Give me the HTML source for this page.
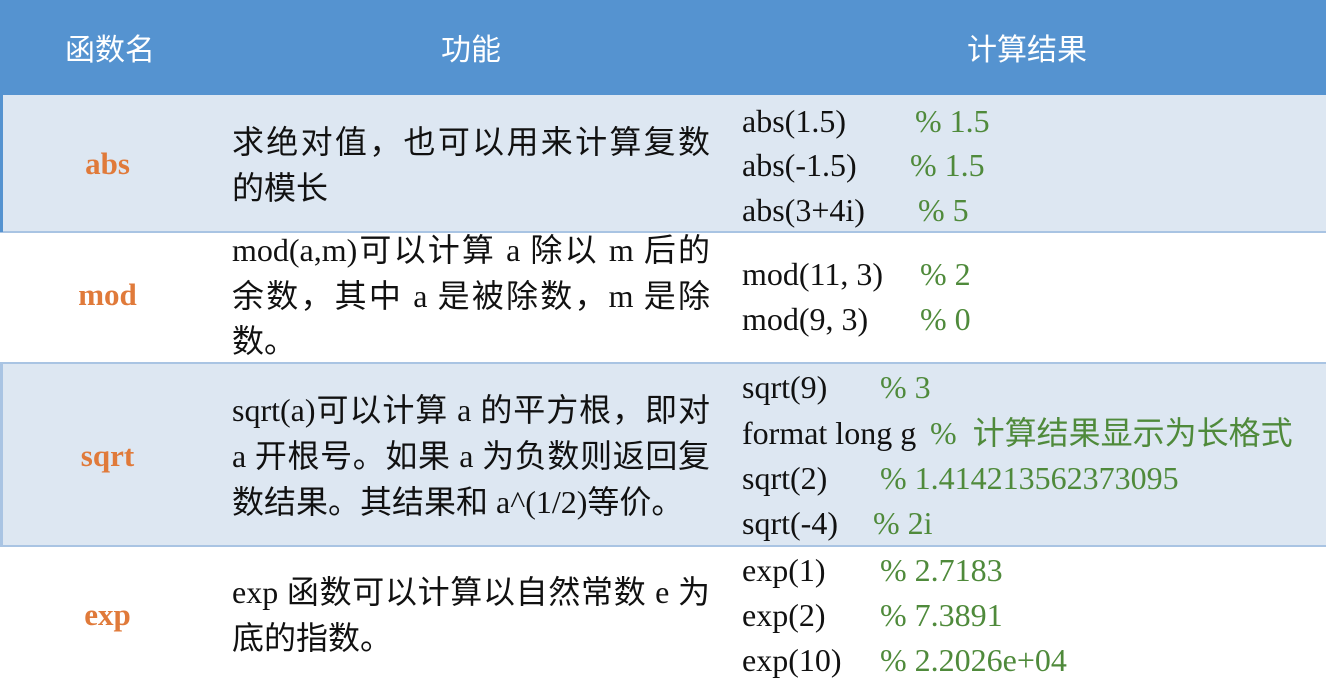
<!DOCTYPE html>
<html><head><meta charset="utf-8"><style>
body{margin:0;width:1326px;height:677px;overflow:hidden;background:#fff;position:relative;font-family:"Liberation Serif","Noto Sans CJK SC",serif;}
.r{position:absolute;left:0;width:1326px}
.t{position:absolute;font-size:32px;line-height:36px;color:#111;white-space:nowrap}
.h{color:#fff;font-family:"Noto Sans CJK SC",sans-serif;font-size:30px;text-align:center}
.f{color:#e07a3a;font-weight:bold;font-size:31px;width:215px;text-align:center;left:0}
.j{width:478px;text-align:justify;text-align-last:justify;white-space:normal}
.g{color:#4f8a3b}
</style></head><body>
<div class="r" style="top:0;height:95px;background:#5593d0"></div>
<div class="r" style="top:95px;height:136px;background:#dde7f2;border-bottom:2px solid #a9c4e3"></div>
<div class="r" style="top:362px;height:181px;background:#dde7f2;border-top:2px solid #a9c4e3;border-bottom:2px solid #a9c4e3"></div>
<div style="position:absolute;left:0;top:0;width:3px;height:232px;background:#5593d0"></div>
<div style="position:absolute;left:0;top:362px;width:3px;height:184px;background:#a9c4e3"></div>

<div class="t h" style="left:10px;width:200px;top:29px">函数名</div>
<div class="t h" style="left:371px;width:200px;top:29px">功能</div>
<div class="t h" style="left:927px;width:200px;top:29px">计算结果</div>

<div class="t f" style="top:146px">abs</div>
<div class="t f" style="top:277px">mod</div>
<div class="t f" style="top:438px">sqrt</div>
<div class="t f" style="top:597px">exp</div>

<div class="t j" style="left:232px;top:124px">求绝对值，也可以用来计算复数</div>
<div class="t" style="left:232px;top:170px">的模长</div>
<div class="t j" style="left:232px;top:232px">mod(a,m)可以计算 a 除以 m 后的</div>
<div class="t j" style="left:232px;top:278px">余数，其中 a 是被除数，m 是除</div>
<div class="t" style="left:232px;top:323px">数。</div>
<div class="t j" style="left:232px;top:392px">sqrt(a)可以计算 a 的平方根，即对</div>
<div class="t j" style="left:232px;top:438px">a 开根号。如果 a 为负数则返回复</div>
<div class="t" style="left:232px;top:484px">数结果。其结果和 a^(1/2)等价。</div>
<div class="t j" style="left:232px;top:574px">exp 函数可以计算以自然常数 e 为</div>
<div class="t" style="left:232px;top:620px">底的指数。</div>

<div class="t" style="left:742px;top:103px">abs(1.5)</div><div class="t g" style="left:915px;top:103px">% 1.5</div>
<div class="t" style="left:742px;top:147px">abs(-1.5)</div><div class="t g" style="left:910px;top:147px">% 1.5</div>
<div class="t" style="left:742px;top:192px">abs(3+4i)</div><div class="t g" style="left:918px;top:192px">% 5</div>
<div class="t" style="left:742px;top:256px">mod(11, 3)</div><div class="t g" style="left:920px;top:256px">% 2</div>
<div class="t" style="left:742px;top:301px">mod(9, 3)</div><div class="t g" style="left:920px;top:301px">% 0</div>
<div class="t" style="left:742px;top:369px">sqrt(9)</div><div class="t g" style="left:880px;top:369px">% 3</div>
<div class="t" style="left:742px;top:415px">format long g</div><div class="t g" style="left:930px;top:415px">% &nbsp;计算结果显示为长格式</div>
<div class="t" style="left:742px;top:460px">sqrt(2)</div><div class="t g" style="left:880px;top:460px">% 1.414213562373095</div>
<div class="t" style="left:742px;top:505px">sqrt(-4)</div><div class="t g" style="left:873px;top:505px">% 2i</div>
<div class="t" style="left:742px;top:552px">exp(1)</div><div class="t g" style="left:880px;top:552px">% 2.7183</div>
<div class="t" style="left:742px;top:597px">exp(2)</div><div class="t g" style="left:880px;top:597px">% 7.3891</div>
<div class="t" style="left:742px;top:642px">exp(10)</div><div class="t g" style="left:880px;top:642px">% 2.2026e+04</div>
</body></html>
